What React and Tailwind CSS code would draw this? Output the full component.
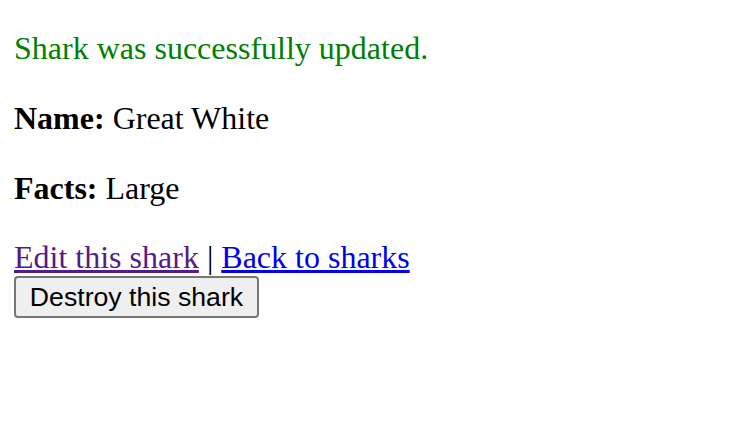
export default function App() {
  return (
    <div className="bg-white min-h-[431px] px-[14px] pt-[29px] text-black text-[32px] leading-[38px]" style={{ fontFamily: '"Liberation Serif", "Times New Roman", serif' }}>
      <p className="text-[#008000] mb-[32px]">Shark was successfully updated.</p>
      <p className="mb-[32px]"><strong>Name:</strong> Great White</p>
      <p className="mb-[31px]"><strong>Facts:</strong> Large</p>
      <div>
        <a href="#" className="text-[#551a8b] underline">Edit this shark</a> |{" "}
        <a href="#" className="text-[#0000ee] underline">Back to sharks</a>
        <form>
          <button type="button" className="h-[42px] w-[245px] border-2 border-[#767676] rounded-[4px] bg-[#efefef] text-[26.67px] leading-none text-black" style={{ fontFamily: '"Liberation Sans", Arial, sans-serif' }}>Destroy this shark</button>
        </form>
      </div>
    </div>
  );
}
